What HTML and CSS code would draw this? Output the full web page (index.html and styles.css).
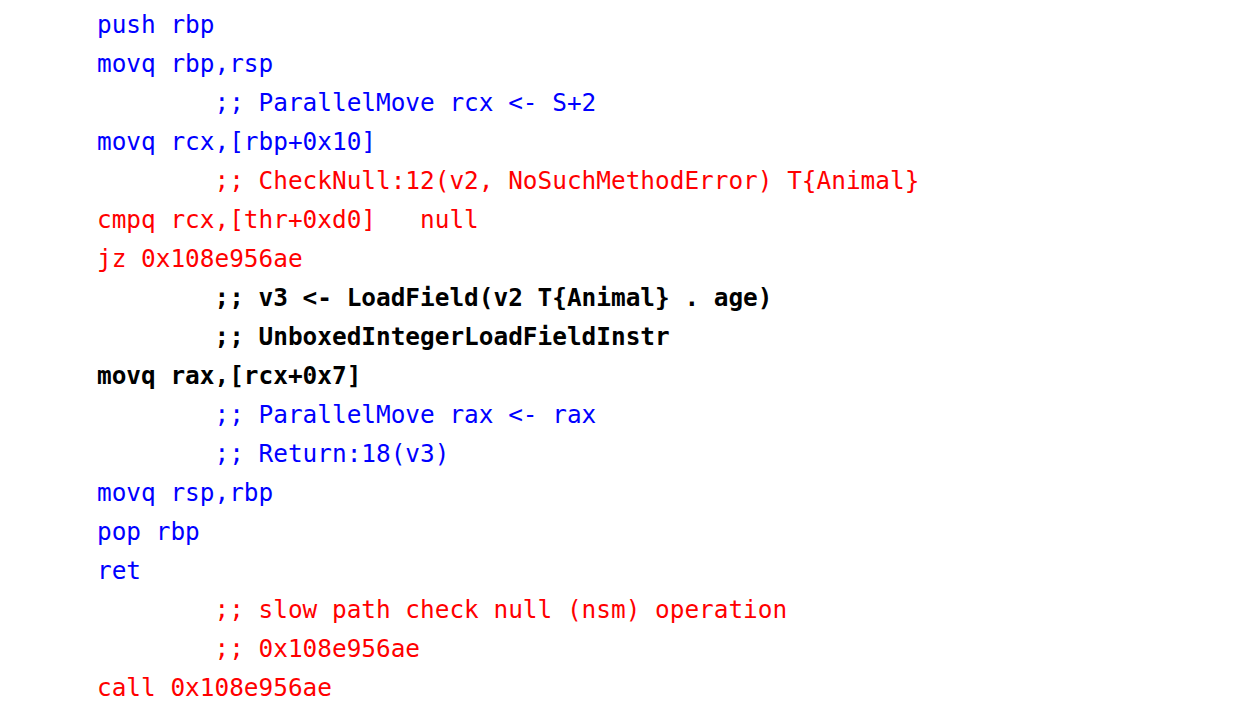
FILE: index.html
```html
<!DOCTYPE html>
<html>
<head>
<meta charset="utf-8">
<link rel="stylesheet" href="styles.css">
</head>
<body>
<div class="code">
<div class="ln blue">push rbp</div>
<div class="ln blue">movq rbp,rsp</div>
<div class="ln blue">        ;; ParallelMove rcx &lt;- S+2</div>
<div class="ln blue">movq rcx,[rbp+0x10]</div>
<div class="ln red">        ;; CheckNull:12(v2, NoSuchMethodError) T{Animal}</div>
<div class="ln red">cmpq rcx,[thr+0xd0]   null</div>
<div class="ln red">jz 0x108e956ae</div>
<div class="ln bold">        ;; v3 &lt;- LoadField(v2 T{Animal} . age)</div>
<div class="ln bold">        ;; UnboxedIntegerLoadFieldInstr</div>
<div class="ln bold">movq rax,[rcx+0x7]</div>
<div class="ln blue">        ;; ParallelMove rax &lt;- rax</div>
<div class="ln blue">        ;; Return:18(v3)</div>
<div class="ln blue">movq rsp,rbp</div>
<div class="ln blue">pop rbp</div>
<div class="ln blue">ret</div>
<div class="ln red">        ;; slow path check null (nsm) operation</div>
<div class="ln red">        ;; 0x108e956ae</div>
<div class="ln red">call 0x108e956ae</div>
</div>
</body>
</html>
```
FILE: styles.css
```css
html, body {
  margin: 0;
  padding: 0;
  background: #ffffff;
}
.code {
  padding: 5px 0 0 97px;
  font-family: "DejaVu Sans Mono", "Liberation Mono", monospace;
  font-size: 24.4px;
  line-height: 39px;
}
.ln {
  white-space: pre;
}
.blue { color: #0000ff; }
.red { color: #ff0000; }
.bold { color: #000000; font-weight: bold; }
```
